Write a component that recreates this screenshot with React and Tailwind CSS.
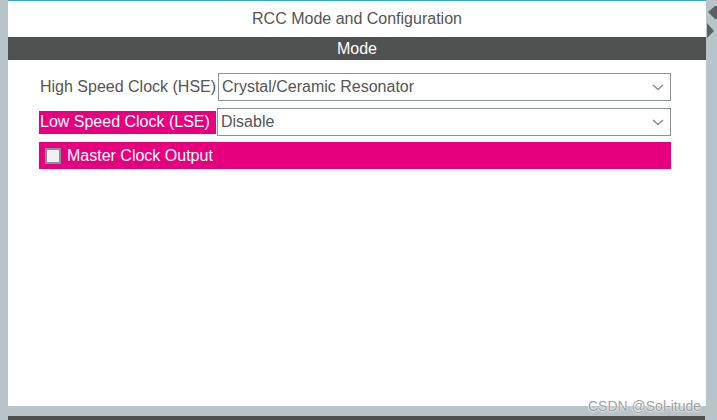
import React from 'react';

const font = { fontFamily: '"Liberation Sans", Arial, sans-serif' };

function Chevron() {
    return (
        <svg width="12" height="7" viewBox="0 0 12 7" className="shrink-0">
            <path d="M1 1 L6 5.5 L11 1" fill="none" stroke="#8c8f94" strokeWidth="1.6" />
        </svg>
    );
}

function SelectBox({ value, className }) {
    return (
        <div className={`flex items-center justify-between border border-[#8e9296] bg-white pl-[3px] pr-[6px] text-[16px] text-[#555] ${className}`}>
            <span>{value}</span>
            <Chevron />
        </div>
    );
}

export default function App() {
    return (
        <div className="relative flex h-[420px] w-[717px] overflow-hidden bg-[#b9c4ca]" style={font}>
            <div className="w-[8px] shrink-0" />
            <div className="flex w-[698px] flex-col">
                <div className="flex h-[406px] flex-col bg-white border-t border-[#2fa5e0]">
                    <div className="flex h-[36px] items-center justify-center text-[16px] text-[#555]">
                        RCC Mode and Configuration
                    </div>
                    <div className="flex h-[23px] items-center justify-center bg-[#505252] text-[16px] text-white">
                        Mode
                    </div>
                    <div className="flex flex-col pl-[31px] pr-[35px] pt-[13px]">
                        <div className="flex h-[28px] items-center">
                            <div className="w-[179px] pl-[1px] text-[16px] text-[#555]">High Speed Clock (HSE)</div>
                            <SelectBox value="Crystal/Ceramic Resonator" className="h-[28px] flex-1" />
                        </div>
                        <div className="mt-[7px] flex h-[28px] items-center">
                            <div className="flex h-[23px] w-[177px] items-center bg-[#e6007e] pl-[1px] text-[16px] text-white">
                                Low Speed Clock (LSE)
                            </div>
                            <div className="w-[1px]" />
                            <SelectBox value="Disable" className="h-[28px] flex-1" />
                        </div>
                        <div className="mt-[6px] flex h-[27px] items-center bg-[#e6007e] pl-[6px] text-[16px] text-white">
                            <div className="mr-[6px] h-[16px] w-[16px] border-2 border-[#8a8d9c] bg-[#eef0f2]" />
                            Master Clock Output
                        </div>
                    </div>
                </div>
                <div className="h-[10px]" />
                <div className="h-[4px] w-[697px] bg-[#4e4f4f]" />
            </div>
            <div className="flex w-[11px] flex-col pt-[4px]">
                <svg width="11" height="34" viewBox="0 0 11 34">
                    <path d="M2 8 L9 2 L11 2 L11 15 L9 15 Z" fill="#5d6063" />
                    <path d="M1 19 L1 34 L8 27 Z" fill="#5d6063" />
                </svg>
            </div>
            <div
                className="absolute left-[588px] top-[396px] text-[14px] text-[#a0a0a0]"
                style={{ textShadow: '0 0 2px #fff, 0 0 2px #fff' }}
            >
                CSDN @Sol-itude
            </div>
        </div>
    );
}
